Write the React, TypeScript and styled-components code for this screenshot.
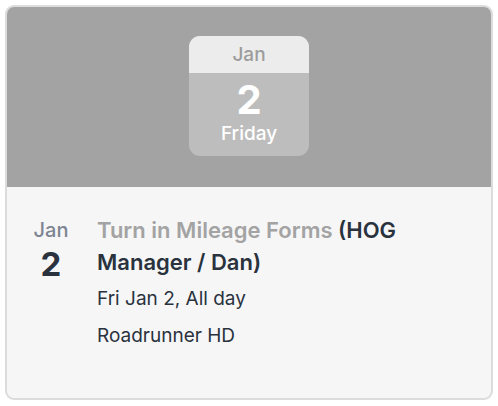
import styled, { createGlobalStyle } from "styled-components";

const GlobalStyle = createGlobalStyle`
  body {
    margin: 0;
    padding: 5px;
    font-family: Inter, "Noto Sans", sans-serif;
    background: #ffffff;
  }
`;

const Card = styled.div`
  width: 488px;
  box-sizing: border-box;
  border: 2px solid #dcdcdc;
  border-radius: 9px;
  overflow: hidden;
  background: #f6f6f7;
`;

const Banner = styled.div`
  background: #a3a3a3;
  height: 180px;
  display: flex;
  align-items: center;
  justify-content: center;
`;

const Tile = styled.div`
  width: 120px;
  height: 120px;
  border-radius: 11px;
  overflow: hidden;
  display: flex;
  flex-direction: column;
  background: #bdbdbd;
  margin-bottom: 2px;
`;

const TileMonth = styled.div`
  height: 37px;
  background: #ececec;
  color: #9c9c9c;
  font-size: 19px;
  font-weight: 500;
  display: flex;
  align-items: center;
  justify-content: center;
`;

const TileBody = styled.div`
  flex: 1;
  display: flex;
  flex-direction: column;
  align-items: center;
  color: #ffffff;
  padding-top: 4px;
`;

const TileDay = styled.div`
  font-size: 40px;
  font-weight: 700;
  line-height: 46px;
`;

const TileWeekday = styled.div`
  font-size: 19px;
  font-weight: 500;
  line-height: 22px;
`;

const Details = styled.div`
  display: flex;
  gap: 26px;
  padding: 27px 24px 51px 24px;
`;

const DateCol = styled.div`
  width: 40px;
  display: flex;
  flex-direction: column;
  align-items: center;
  padding-top: 5px;
`;

const DateMonth = styled.div`
  font-size: 20px;
  font-weight: 500;
  line-height: 22px;
  color: #7d8592;
`;

const DateDay = styled.div`
  font-size: 33px;
  font-weight: 700;
  line-height: 36px;
  margin-top: 5px;
  color: #29323d;
`;

const Info = styled.div`
  flex: 1;
  color: #29323d;
`;

const Title = styled.div`
  font-size: 22px;
  font-weight: 600;
  line-height: 32px;
  margin-bottom: 10px;
`;

const TitleLink = styled.span`
  color: #a3a3a3;
`;

const Line = styled.div<{ $gap?: number }>`
  font-size: 19px;
  line-height: 22px;
  margin-bottom: ${(p) => p.$gap ?? 0}px;
`;

export default function App() {
  return (
    <>
      <GlobalStyle />
      <Card>
        <Banner>
          <Tile>
            <TileMonth>Jan</TileMonth>
            <TileBody>
              <TileDay>2</TileDay>
              <TileWeekday>Friday</TileWeekday>
            </TileBody>
          </Tile>
        </Banner>
        <Details>
          <DateCol>
            <DateMonth>Jan</DateMonth>
            <DateDay>2</DateDay>
          </DateCol>
          <Info>
            <Title>
              <TitleLink>Turn in Mileage Forms</TitleLink> (HOG Manager / Dan)
            </Title>
            <Line $gap={15}>Fri Jan 2, All day</Line>
            <Line>Roadrunner HD</Line>
          </Info>
        </Details>
      </Card>
    </>
  );
}
